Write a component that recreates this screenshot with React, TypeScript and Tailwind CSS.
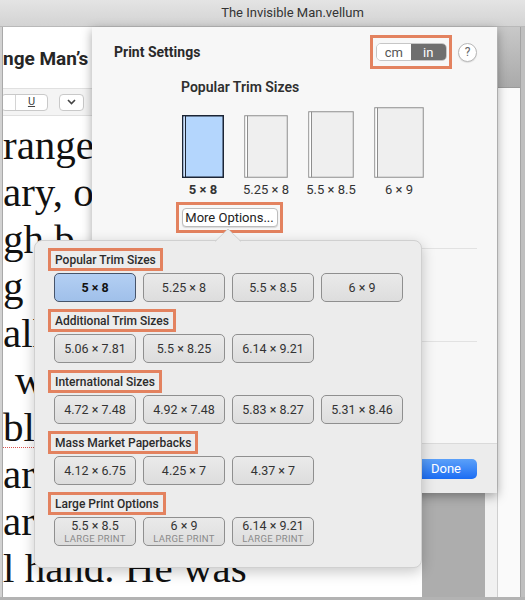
import React from 'react';

type SizeItem = { size: string; selected?: boolean };

const books = [
    { label: '5 × 8', w: 42, h: 63, col: 'w-[42px]', selected: true },
    { label: '5.25 × 8', w: 44, h: 63, col: 'w-[44px]' },
    { label: '5.5 × 8.5', w: 46, h: 67, col: 'w-[46px]' },
    { label: '6 × 9', w: 50, h: 71, col: 'w-[50px]' },
];

const sections: { title: string; items: SizeItem[]; large?: boolean }[] = [
    { title: 'Popular Trim Sizes', items: [{ size: '5 × 8', selected: true }, { size: '5.25 × 8' }, { size: '5.5 × 8.5' }, { size: '6 × 9' }] },
    { title: 'Additional Trim Sizes', items: [{ size: '5.06 × 7.81' }, { size: '5.5 × 8.25' }, { size: '6.14 × 9.21' }] },
    { title: 'International Sizes', items: [{ size: '4.72 × 7.48' }, { size: '4.92 × 7.48' }, { size: '5.83 × 8.27' }, { size: '5.31 × 8.46' }] },
    { title: 'Mass Market Paperbacks', items: [{ size: '4.12 × 6.75' }, { size: '4.25 × 7' }, { size: '4.37 × 7' }] },
    { title: 'Large Print Options', items: [{ size: '5.5 × 8.5' }, { size: '6 × 9' }, { size: '6.14 × 9.21' }], large: true },
];

// the part of the chapter text that peeks out left of the sheet
const docLines = [
    { text: 'range', cls: '' },
    { text: 'ary, o', cls: '' },
    { text: 'gh b', cls: '' },
    { text: 'g s', cls: '' },
    { text: 'all', cls: '' },
    { text: 'w', cls: 'pl-[12px]' },
    { text: 'ble', cls: 'underline decoration-dotted decoration-[#d9534f] decoration-1 underline-offset-[6px]' },
    { text: 'arr', cls: '' },
    { text: 'ar', cls: '' },
    { text: 'l hand. He was', cls: '' },
];

const BookIcon = ({ w, h, selected }: { w: number; h: number; selected?: boolean }) => {
    const stroke = selected ? '#1c2535' : '#8e8e8e';
    const fill = selected ? '#b4d6fd' : '#efefef';
    return (
        <svg width={w} height={h} viewBox={`0 0 ${w} ${h}`}>
            <rect x={0.75} y={0.75} width={w - 1.5} height={h - 1.5} fill={fill} stroke={stroke} strokeWidth={selected ? 1.5 : 1} />
            <rect x={1.5} y={1.5} width={2} height={h - 3} fill={selected ? '#cfe4fd' : '#ffffff'} />
            <line x1={3.5} y1={0.75} x2={3.5} y2={h - 0.75} stroke={stroke} strokeWidth={1} />
        </svg>
    );
};

const SizeButton = ({ item, large }: { item: SizeItem; large?: boolean }) => (
    <div
        className={`w-[82px] h-[29px] rounded-[5px] border flex flex-col items-center justify-center ${
            item.selected
                ? 'border-[#46546a] bg-linear-to-b from-[#b3cff3] to-[#a0c0ea] font-bold text-[#111]'
                : 'border-[#8f8f8f] bg-linear-to-b from-[#eaeaea] to-[#dddddd] text-[#333]'
        }`}
    >
        <span className="text-[12.5px] leading-[14px]">{item.size}</span>
        {large && <span className="text-[9.5px] leading-[11px] tracking-[0.3px] text-[#8a8a8a]">LARGE PRINT</span>}
    </div>
);

const Highlight = ({ children, className = '' }: { children: React.ReactNode; className?: string }) => (
    <div className={`border-[3px] border-[#e3825f] ${className}`}>{children}</div>
);

export default function App() {
    return (
        <div className="relative w-[525px] h-[600px] overflow-hidden bg-white font-['Roboto',sans-serif] flex flex-col">
            {/* title bar */}
            <div className="h-[27px] shrink-0 bg-linear-to-b from-[#e4e4e4] to-[#d3d3d3] border-b border-[#b9b9b9] flex items-center justify-center pl-[60px]">
                <span className="text-[13px] text-[#333]">The Invisible Man.vellum</span>
            </div>

            {/* window body */}
            <div className="flex-1 flex min-h-0">
                <div className="w-[3px] bg-[#d2d2d2] border-r border-[#a9a9a9]" />

                {/* document */}
                <div className="w-[419px] flex flex-col overflow-hidden bg-white">
                    <div className="h-[61px] shrink-0 flex items-center pt-[3px]">
                        <span className="text-[19px] font-bold text-[#262626] whitespace-nowrap">nge Man’s</span>
                    </div>
                    <div className="h-[28px] shrink-0 bg-[#f4f4f4] border-y border-[#e0e0e0] flex items-center">
                        <div className="-ml-[2px] flex h-[17px] rounded-[4px] border border-[#c9c9c9] bg-white">
                            <div className="w-[14px] border-r border-[#d4d4d4]" />
                            <div className="w-[31px] flex items-center justify-center text-[11px] text-[#444] underline">U</div>
                        </div>
                        <div className="ml-[11px] w-[25px] h-[17px] rounded-[4px] border border-[#c9c9c9] bg-white flex items-center justify-center">
                            <svg width="9" height="6" viewBox="0 0 9 6">
                                <path d="M1 1 L4.5 4.5 L8 1" fill="none" stroke="#444" strokeWidth="1.6" />
                            </svg>
                        </div>
                    </div>
                    <div className="pt-[6px] font-['Liberation_Serif',serif] text-[41px] leading-[47px] text-[#111]">
                        {docLines.map((l, i) => (
                            <div key={i} className="whitespace-nowrap">
                                <span className={l.cls}>{l.text}</span>
                            </div>
                        ))}
                    </div>
                </div>

                <div className="w-[63px] bg-[#adadad]" />
                <div className="w-[12px] bg-[#f1f1f1]" />
                <div className="w-[23px] flex flex-col border-l border-[#cfcfcf]">
                    <div className="h-[61px] bg-linear-to-b from-[#c8c8c8] to-[#aaaaaa] border-b border-[#9a9a9a]" />
                    <div className="flex-1 bg-[#fafafa]" />
                </div>
                <div className="w-[5px] bg-[#bfbfbf] border-l border-[#a3a3a3]" />
            </div>
            <div className="h-[3px] shrink-0 bg-[#b3b3b3]" />

            {/* print settings sheet */}
            <div className="absolute left-[92px] top-[27px] w-[405px] h-[466px] bg-[#f7f7f7] shadow-[0_3px_10px_rgba(0,0,0,0.35)] flex flex-col">
                <div className="mt-[8px] h-[34px] pl-[22px] pr-[20px] flex items-center">
                    <span className="text-[14px] font-bold text-[#2a2a2a]">Print Settings</span>
                    <Highlight className="ml-auto w-[82px] h-[34px] flex items-center justify-center">
                        <div className="flex w-[71px] h-[18px] rounded-[5px] border border-[#c6c6c6] overflow-hidden text-[13px] leading-none">
                            <div className="flex-1 bg-white text-[#555] flex items-center justify-center">cm</div>
                            <div className="flex-1 bg-[#6f6f6f] text-white flex items-center justify-center">in</div>
                        </div>
                    </Highlight>
                    <div className="ml-[6px] w-[19px] h-[19px] rounded-full border border-[#b8b8b8] bg-white shadow-[0_1px_1px_rgba(0,0,0,0.1)] flex items-center justify-center text-[12px] text-[#666]">
                        ?
                    </div>
                </div>

                <div className="mt-[10px] pl-[89px] text-[14px] leading-[17px] font-semibold text-[#2f2f2f]">Popular Trim Sizes</div>

                <div className="mt-[11px] pl-[90px] flex items-end gap-[20px]">
                    {books.map((b) => (
                        <div key={b.label} className={`${b.col} flex flex-col items-center`}>
                            <BookIcon w={b.w} h={b.h} selected={b.selected} />
                            <span className={`mt-[4px] text-[13px] leading-[16px] whitespace-nowrap text-[#333] ${b.selected ? 'font-bold text-[#111]' : ''}`}>
                                {b.label}
                            </span>
                        </div>
                    ))}
                </div>

                <Highlight className="mt-[4px] ml-[84px] w-[107px] h-[31px] flex items-center justify-center">
                    <div className="w-[96px] h-[19px] rounded-[4px] border border-[#bdbdbd] bg-white shadow-[0_1px_1px_rgba(0,0,0,0.12)] flex items-center justify-center text-[13px] text-[#222]">
                        More Options...
                    </div>
                </Highlight>

                <div className="mt-[15px] ml-[22px] mr-[20px] h-px bg-[#e2e2e2]" />
                <div className="mt-[92px] ml-[22px] mr-[20px] h-px bg-[#e2e2e2]" />

                <div className="mt-auto h-[50px] bg-[#ececec] border-t border-[#dadada] flex items-center justify-end pr-[20px]">
                    <div className="w-[62px] h-[20px] rounded-[5px] bg-linear-to-b from-[#5ba0f9] to-[#1a6cf3] text-white text-[13px] flex items-center justify-center">
                        Done
                    </div>
                </div>
            </div>

            {/* more options popover */}
            <div className="absolute left-[34px] top-[240px] w-[388px] h-[328px] rounded-[8px] bg-[#ececec] border border-[#d0d0d0] shadow-[0_4px_14px_rgba(0,0,0,0.22)] pt-[7px] pl-[19px]">
                <svg className="absolute left-[180px] -top-[13px]" width="26" height="14" viewBox="0 0 26 14">
                    <path d="M0 14 L13 1 L26 14 Z" fill="#ececec" />
                    <path d="M0 13.5 L13 1 L26 13.5" fill="none" stroke="#d0d0d0" strokeWidth="1" />
                </svg>
                {sections.map((s) => (
                    <div key={s.title} className="flex flex-col items-start mb-[7px]">
                        <Highlight className="-ml-[6px] h-[23px] px-[4px] flex items-center">
                            <span className="text-[12px] font-medium text-[#2b2b2b] whitespace-nowrap">{s.title}</span>
                        </Highlight>
                        <div className="mt-[2px] flex gap-[7px]">
                            {s.items.map((it) => (
                                <SizeButton key={it.size} item={it} large={s.large} />
                            ))}
                        </div>
                    </div>
                ))}
            </div>
        </div>
    );
}
